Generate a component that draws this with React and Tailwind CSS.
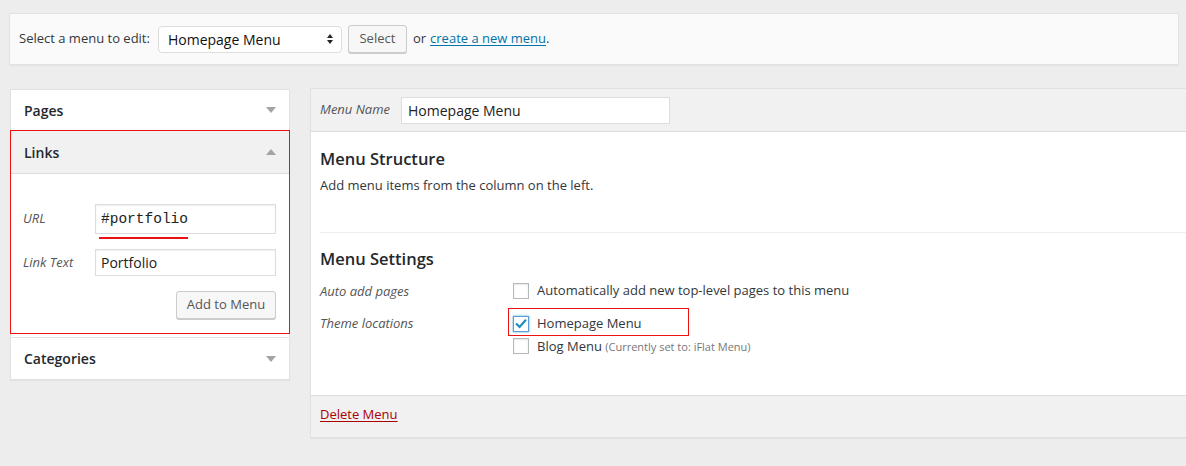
import { useState } from 'react';

function Caret({ up }) {
    return (
        <svg width="10" height="6" viewBox="0 0 10 6" className="shrink-0">
            {up ? <path d="M0 6 L5 0 L10 6 Z" fill="#a0a5aa" /> : <path d="M0 0 L10 0 L5 6 Z" fill="#a0a5aa" />}
        </svg>
    );
}

function Checkbox({ checked, focused }) {
    return (
        <span className={`w-[16px] h-[16px] shrink-0 bg-white flex items-center justify-center ${focused ? 'border border-[#5b9dd9] shadow-[0_0_2px_rgba(30,140,190,0.8)]' : 'border border-[#b4b9be] shadow-[inset_0_1px_2px_rgba(0,0,0,0.1)]'}`}>
            {checked && (
                <svg width="12" height="12" viewBox="0 0 12 12">
                    <path d="M1.8 6.2 L4.6 9 L10.2 2.6" fill="none" stroke="#1e8cbe" strokeWidth="2.2" strokeLinecap="square" />
                </svg>
            )}
        </span>
    );
}

export default function App() {
    const [url, setUrl] = useState('#portfolio');
    const [linkText, setLinkText] = useState('Portfolio');
    const [menuName, setMenuName] = useState('Homepage Menu');

    return (
        <div className="w-[1186px] h-[466px] overflow-hidden bg-[#ededed] font-['Open_Sans',sans-serif] text-[#32373c] pt-[13px] pl-[9px]">
            {/* Select menu bar */}
            <div className="w-[1170px] h-[52px] bg-[#fafafa] border border-[#e3e3e3] shadow-[0_1px_1px_rgba(0,0,0,0.04)] flex items-center pl-[9px] text-[13px]">
                <span className="mr-[8px]">Select a menu to edit:</span>
                <div className="w-[184px] h-[27px] bg-white border border-[#ddd] rounded-[4px] flex items-center justify-between pl-[9px] pr-[8px] text-[14px] text-[#111]">
                    <span>Homepage Menu</span>
                    <svg width="6" height="12" viewBox="0 0 6 12">
                        <path d="M0 5 L3 1 L6 5 Z" fill="#222" />
                        <path d="M0 7 L3 11 L6 7 Z" fill="#222" />
                    </svg>
                </div>
                <button className="ml-[6px] h-[28px] w-[59px] bg-[#f7f7f7] border border-[#ccc] rounded-[3px] shadow-[0_1px_0_#ccc] text-[13px] text-[#555]">Select</button>
                <span className="ml-[6px]">or</span>
                <a className="ml-[4px] text-[#0073aa] underline underline-offset-2">create a new menu</a>
                <span>.</span>
            </div>

            <div className="flex mt-[23px] ml-[1px]">
                {/* Left column */}
                <div className="w-[280px] shrink-0 mt-[1px]">
                    <div className="bg-white border border-[#e1e1e1] shadow-[0_1px_1px_rgba(0,0,0,0.04)]">
                        <div className="h-[40px] flex items-center justify-between pl-[13px] pr-[13px]">
                            <span className="text-[14px] font-semibold text-[#23282d]">Pages</span>
                            <Caret />
                        </div>
                        <div className="border border-[#ee1111] -mx-px">
                            <div className="h-[43px] bg-[#f1f1f1] border-b border-[#ddd] flex items-center justify-between pl-[13px] pr-[13px]">
                                <span className="text-[14px] font-semibold text-[#23282d]">Links</span>
                                <Caret up />
                            </div>
                            <div className="pt-[30px] pb-[14px] pl-[12px] pr-[13px]">
                                <div className="flex items-center">
                                    <label className="w-[72px] shrink-0 text-[13px] italic text-[#555]">URL</label>
                                    <div className="flex-1 relative">
                                        <input value={url} onChange={e => setUrl(e.target.value)} className="w-full h-[30px] border border-[#ddd] shadow-[inset_0_1px_2px_rgba(0,0,0,0.07)] px-[5px] text-[14.5px] font-['Liberation_Mono',monospace] text-[#222] outline-none" />
                                        <span className="absolute left-[4px] top-[33px] w-[89px] h-[2px] bg-[#e11]" />
                                    </div>
                                </div>
                                <div className="flex items-center mt-[15px]">
                                    <label className="w-[72px] shrink-0 text-[13px] italic text-[#555]">Link Text</label>
                                    <input value={linkText} onChange={e => setLinkText(e.target.value)} className="flex-1 min-w-0 h-[27px] border border-[#ddd] shadow-[inset_0_1px_2px_rgba(0,0,0,0.07)] px-[5px] text-[14px] text-[#222] outline-none" />
                                </div>
                                <div className="flex justify-end mt-[15px]">
                                    <button className="h-[28px] w-[100px] bg-[#f7f7f7] border border-[#ccc] rounded-[3px] shadow-[0_1px_0_#ccc] text-[13px] text-[#555]">Add to Menu</button>
                                </div>
                            </div>
                        </div>
                        <div className="h-[3px]" />
                        <div className="h-[42px] border-t border-[#e1e1e1] flex items-center justify-between pl-[13px] pr-[13px]">
                            <span className="text-[14px] font-semibold text-[#23282d]">Categories</span>
                            <Caret />
                        </div>
                    </div>
                </div>

                {/* Right panel */}
                <div className="w-[900px] shrink-0 ml-[20px] border border-[#e1e1e1] bg-white shadow-[0_1px_1px_rgba(0,0,0,0.04)]">
                    <div className="h-[43px] bg-[#f1f1f1] border-b border-[#dcdcdc] flex items-center pl-[9px]">
                        <label className="text-[13px] italic text-[#555] mr-[11px]">Menu Name</label>
                        <input value={menuName} onChange={e => setMenuName(e.target.value)} className="w-[269px] h-[27px] bg-white border border-[#ddd] px-[6px] text-[14px] text-[#222] outline-none" />
                    </div>
                    <div className="pl-[9px]">
                        <div className="pt-[16px] pb-[36px]">
                            <h3 className="text-[16.5px] font-semibold text-[#23282d] leading-[22px]">Menu Structure</h3>
                            <p className="text-[13px] mt-[6px]">Add menu items from the column on the left.</p>
                        </div>
                        <div className="border-t border-[#eee] pt-[15px] pb-[39px]">
                            <h3 className="text-[16.5px] font-semibold text-[#23282d] leading-[22px]">Menu Settings</h3>
                            <div className="flex mt-[11px]">
                                <div className="w-[193px] text-[13px] italic text-[#555] pt-[1px]">Auto add pages</div>
                                <div className="flex items-center gap-[8px] text-[13px]">
                                    <Checkbox />
                                    <span>Automatically add new top-level pages to this menu</span>
                                </div>
                            </div>
                            <div className="flex mt-[13px]">
                                <div className="w-[193px] text-[13px] italic text-[#555]">Theme locations</div>
                                <div className="flex flex-col">
                                    <div className="relative flex items-center gap-[8px] text-[13px]">
                                        <span className="absolute -left-[5px] -top-[6px] w-[181px] h-[28px] border border-[#ee1111]" />
                                        <Checkbox checked focused />
                                        <span>Homepage Menu</span>
                                    </div>
                                    <div className="flex items-center gap-[8px] text-[13px] mt-[3px]">
                                        <Checkbox />
                                        <span>Blog Menu <span className="text-[11px] text-[#777]">(Currently set to: iFlat Menu)</span></span>
                                    </div>
                                </div>
                            </div>
                        </div>
                    </div>
                    <div className="h-[42px] bg-[#f1f1f1] border-t border-[#dcdcdc] flex items-center pl-[9px] pb-[3px]">
                        <a className="text-[13px] text-[#a00] underline underline-offset-2">Delete Menu</a>
                    </div>
                </div>
            </div>
        </div>
    );
}
